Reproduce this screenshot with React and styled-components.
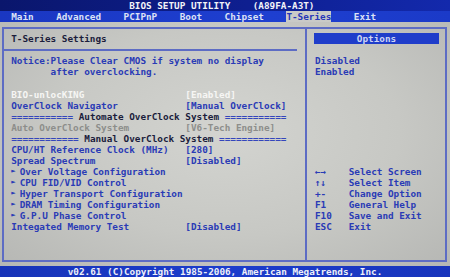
import React from 'react';
import styled, { createGlobalStyle } from 'styled-components';

// text-mode screen: 80 cols x 25 rows squeezed into 450x277
const ROW = 11.08;
const LINE = '#5d6cc4';

const tones = {
  blue: '#2a3bb6',
  white: '#f6f6f4',
  grey: '#8d8e8b',
  dark: '#1b1d3c',
};

const GlobalStyle = createGlobalStyle`
  html, body {
    margin: 0;
    padding: 0;
    background: #c6c7c4;
  }
`;

const Screen = styled.div`
  width: 450px;
  height: 277px;
  display: flex;
  flex-direction: column;
  overflow: hidden;
  font-family: "DejaVu Sans Mono", "Liberation Mono", monospace;
  font-size: 9.344px;
  font-weight: bold;
  line-height: ${ROW}px;
  white-space: pre;
`;

const TitleBar = styled.div`
  height: ${ROW}px;
  flex: none;
  display: flex;
  gap: 4ch;
  padding-left: 23ch;
  background: linear-gradient(90deg, #0a166c, #0e1f90 55%, #1329ac);
  color: #f2f3f8;
`;

const MenuBar = styled.div`
  height: ${ROW}px;
  flex: none;
  display: flex;
  gap: 4ch;
  padding-left: 2ch;
  background: linear-gradient(90deg, #1a37c2, #1e3fd0 60%, #1b3ac8);
`;

const MenuItem = styled.span`
  color: ${p => (p.$active ? '#2636b8' : '#dde2f6')};
  background: ${p => (p.$active ? '#c9cac7' : 'transparent')};
`;

const Body = styled.div`
  flex: 1;
  display: flex;
  padding: 5px 3px 4px 2px;
  background: radial-gradient(ellipse at 50% 45%, #d3d4d0 0%, #c7c8c4 55%, #b6b7b4 100%);
`;

const Frame = styled.div`
  flex: 1;
  display: grid;
  grid-template-columns: 301px 1fr;
  border: 2px solid ${LINE};
`;

const LeftPane = styled.div`
  display: flex;
  flex-direction: column;
  padding: 4px 0 0 7.25px;
`;

const RightPane = styled.div`
  display: flex;
  flex-direction: column;
  padding: 4px 6px 0 8px;
  border-left: 2px solid ${LINE};
`;

const Line = styled.div`
  height: ${ROW}px;
  flex: none;
  display: flex;
  padding-left: ${p => p.$indent || 0}ch;
  color: ${p => tones[p.$tone || 'blue']};
`;

const Rule = styled.div`
  height: ${ROW}px;
  flex: none;
  display: flex;
  align-items: center;
  margin: 0 8px 0 -7.25px;

  &::after {
    content: '';
    flex: 1;
    height: 2px;
    background: ${LINE};
  }
`;

const Spacer = styled.div`
  height: ${p => p.$rows * ROW}px;
  flex: none;
`;

const Label = styled.span`
  width: 31ch;
`;

const Eq = styled.span`
  color: #3446bc;
`;

const Arrow = styled.span`
  width: 2ch;
  font-size: 7px;
`;

const OptionsHead = styled.div`
  height: ${ROW}px;
  flex: none;
  margin-left: -1px;
  background: #1f3dca;
  color: #cdd5f4;
  text-align: center;
`;

const Key = styled.span`
  width: 6ch;
`;

const StatusBar = styled.div`
  height: ${ROW}px;
  flex: none;
  text-align: center;
  background: linear-gradient(90deg, #1733b8, #1c3dcc 50%, #1834bc);
  color: #eef0f8;
`;

const menu = ['Main', 'Advanced', 'PCIPnP', 'Boot', 'Chipset', 'T-Series', 'Exit'];

const submenus = [
  'Over Voltage Configuration',
  'CPU FID/VID Control',
  'Hyper Transport Configuration',
  'DRAM Timing Configuration',
  'G.P.U Phase Control',
];

const keys = [
  ['←→', 'Select Screen'],
  ['↑↓', 'Select Item'],
  ['+-', 'Change Option'],
  ['F1', 'General Help'],
  ['F10', 'Save and Exit'],
  ['ESC', 'Exit'],
];

const App = () => {
  return (
    <Screen>
      <GlobalStyle />
      <TitleBar>
        <span>BIOS SETUP UTILITY</span>
        <span>(A89FA-A3T)</span>
      </TitleBar>
      <MenuBar>
        {menu.map(m => (
          <MenuItem key={m} $active={m === 'T-Series'}>{m}</MenuItem>
        ))}
      </MenuBar>

      <Body>
        <Frame>
          <LeftPane>
            <Line $tone="dark">T-Series Settings</Line>
            <Rule />
            <Line>Notice:Please Clear CMOS if system no display</Line>
            <Line $indent={7}>after overclocking.</Line>
            <Spacer $rows={1} />
            <Line $tone="white"><Label>BIO-unlocKING</Label>[Enabled]</Line>
            <Line><Label>OverClock Navigator</Label>[Manual OverClock]</Line>
            <Line $tone="dark"><Eq>===========</Eq> Automate OverClock System <Eq>===========</Eq></Line>
            <Line $tone="grey"><Label>Auto OverClock System</Label>[V6-Tech Engine]</Line>
            <Line $tone="dark"><Eq>============</Eq> Manual OverClock System <Eq>============</Eq></Line>
            <Line><Label>CPU/HT Reference Clock (MHz)</Label>[280]</Line>
            <Line><Label>Spread Spectrum</Label>[Disabled]</Line>
            {submenus.map(s => (
              <Line key={s}><Arrow>►</Arrow>{s}</Line>
            ))}
            <Line><Label>Integated Memory Test</Label>[Disabled]</Line>
          </LeftPane>

          <RightPane>
            <OptionsHead>Options</OptionsHead>
            <Spacer $rows={1} />
            <Line>Disabled</Line>
            <Line>Enabled</Line>
            <Spacer $rows={8} />
            {keys.map(([k, d]) => (
              <Line key={k}><Key>{k}</Key>{d}</Line>
            ))}
          </RightPane>
        </Frame>
      </Body>

      <StatusBar>v02.61 (C)Copyright 1985-2006, American Megatrends, Inc.</StatusBar>
    </Screen>
  );
};

export default App;
